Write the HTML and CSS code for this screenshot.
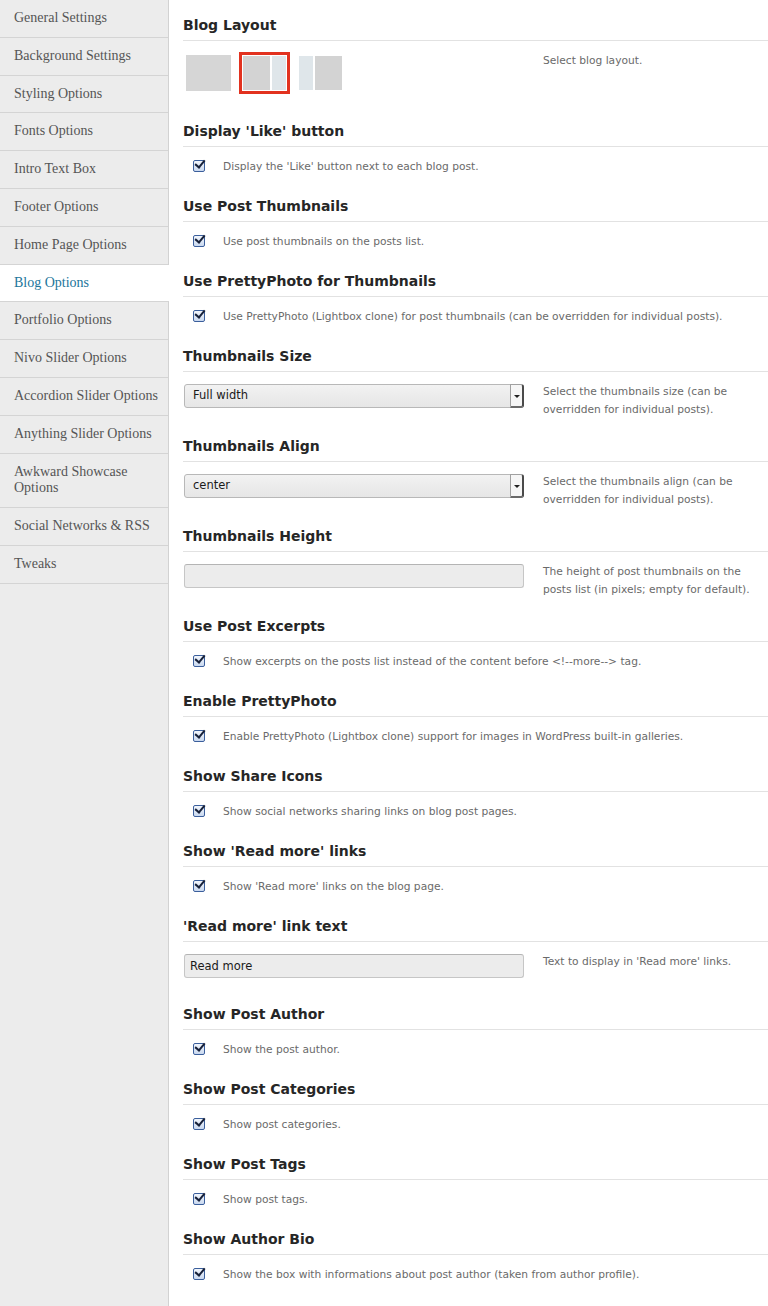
FILE: index.html
```html
<!DOCTYPE html>
<html lang="en">
<head>
    <meta charset="UTF-8">
    <meta name="viewport" content="width=device-width, initial-scale=1.0">
    <title>Theme Options - Blog</title>
    <link rel="stylesheet" href="styles.css">
</head>
<body>
    <div class="page">
        <!-- Options menu -->
        <nav class="sidebar">
            <ul class="menu">
                <li><a href="#">General Settings</a></li>
                <li><a href="#">Background Settings</a></li>
                <li><a href="#">Styling Options</a></li>
                <li><a href="#">Fonts Options</a></li>
                <li><a href="#">Intro Text Box</a></li>
                <li><a href="#">Footer Options</a></li>
                <li><a href="#">Home Page Options</a></li>
                <li class="active"><a href="#">Blog Options</a></li>
                <li><a href="#">Portfolio Options</a></li>
                <li><a href="#">Nivo Slider Options</a></li>
                <li><a href="#">Accordion Slider Options</a></li>
                <li><a href="#">Anything Slider Options</a></li>
                <li><a href="#">Awkward Showcase Options</a></li>
                <li><a href="#">Social Networks &amp; RSS</a></li>
                <li><a href="#">Tweaks</a></li>
            </ul>
        </nav>

        <!-- Blog options -->
        <main class="content">
            <div class="option">
                <h3>Blog Layout</h3>
                <div class="row">
                    <div class="control">
                        <div class="layouts">
                            <span class="layout"><span class="thumb full"></span></span>
                            <span class="layout selected"><span class="thumb right"><i class="main"></i><i class="side"></i></span></span>
                            <span class="layout"><span class="thumb left"><i class="side"></i><i class="main"></i></span></span>
                        </div>
                    </div>
                    <p class="desc">Select blog layout.</p>
                </div>
            </div>

            <div class="option">
                <h3>Display 'Like' button</h3>
                <label class="check-row"><span class="checkbox"></span>Display the 'Like' button next to each blog post.</label>
            </div>

            <div class="option">
                <h3>Use Post Thumbnails</h3>
                <label class="check-row"><span class="checkbox"></span>Use post thumbnails on the posts list.</label>
            </div>

            <div class="option">
                <h3>Use PrettyPhoto for Thumbnails</h3>
                <label class="check-row"><span class="checkbox"></span>Use PrettyPhoto (Lightbox clone) for post thumbnails (can be overridden for individual posts).</label>
            </div>

            <div class="option">
                <h3>Thumbnails Size</h3>
                <div class="row">
                    <div class="control">
                        <div class="select">Full width<span class="arrow"></span></div>
                    </div>
                    <p class="desc">Select the thumbnails size (can be overridden for individual posts).</p>
                </div>
            </div>

            <div class="option">
                <h3>Thumbnails Align</h3>
                <div class="row">
                    <div class="control">
                        <div class="select">center<span class="arrow"></span></div>
                    </div>
                    <p class="desc">Select the thumbnails align (can be overridden for individual posts).</p>
                </div>
            </div>

            <div class="option">
                <h3>Thumbnails Height</h3>
                <div class="row">
                    <div class="control">
                        <input class="text-field" type="text" value="">
                    </div>
                    <p class="desc">The height of post thumbnails on the posts list (in pixels; empty for default).</p>
                </div>
            </div>

            <div class="option">
                <h3>Use Post Excerpts</h3>
                <label class="check-row"><span class="checkbox"></span>Show excerpts on the posts list instead of the content before &lt;!--more--&gt; tag.</label>
            </div>

            <div class="option">
                <h3>Enable PrettyPhoto</h3>
                <label class="check-row"><span class="checkbox"></span>Enable PrettyPhoto (Lightbox clone) support for images in WordPress built-in galleries.</label>
            </div>

            <div class="option">
                <h3>Show Share Icons</h3>
                <label class="check-row"><span class="checkbox"></span>Show social networks sharing links on blog post pages.</label>
            </div>

            <div class="option">
                <h3>Show 'Read more' links</h3>
                <label class="check-row"><span class="checkbox"></span>Show 'Read more' links on the blog page.</label>
            </div>

            <div class="option">
                <h3>'Read more' link text</h3>
                <div class="row">
                    <div class="control">
                        <input class="text-field" type="text" value="Read more">
                    </div>
                    <p class="desc">Text to display in 'Read more' links.</p>
                </div>
            </div>

            <div class="option">
                <h3>Show Post Author</h3>
                <label class="check-row"><span class="checkbox"></span>Show the post author.</label>
            </div>

            <div class="option">
                <h3>Show Post Categories</h3>
                <label class="check-row"><span class="checkbox"></span>Show post categories.</label>
            </div>

            <div class="option">
                <h3>Show Post Tags</h3>
                <label class="check-row"><span class="checkbox"></span>Show post tags.</label>
            </div>

            <div class="option">
                <h3>Show Author Bio</h3>
                <label class="check-row"><span class="checkbox"></span>Show the box with informations about post author (taken from author profile).</label>
            </div>
        </main>
    </div>
</body>
</html>
```

FILE: styles.css
```css
body {
    margin: 0;
    padding: 0;
    background-color: #fff;
    font-family: "DejaVu Sans", Verdana, sans-serif;
    color: #333;
}
.page {
    display: flex;
    min-height: 1306px;
}

/* sidebar menu */
.sidebar {
    width: 168px;
    flex-shrink: 0;
    background-color: #ececec;
    border-right: 1px solid #d2d2d2;
}
.menu {
    list-style: none;
    margin: 0;
    padding: 0;
}
.menu li {
    border-bottom: 1px solid #d4d4d4;
}
.menu a {
    display: block;
    padding: 10px 8px 10px 14px;
    font-family: "Liberation Serif", Georgia, serif;
    font-size: 14px;
    line-height: 16.8px;
    color: #555;
    text-decoration: none;
}
.menu li.active {
    background-color: #fff;
    margin-right: -1px;
}
.menu li.active a {
    color: #21759b;
}

/* options */
.content {
    flex: 1;
    padding-top: 14px;
    padding-left: 14px;
}
.option h3 {
    margin: 0;
    padding: 1px 0 4px;
    font-size: 14px;
    line-height: 21px;
    font-weight: bold;
    color: #262626;
    border-bottom: 1px solid #e2e2e2;
}
.row {
    display: flex;
    gap: 20px;
    padding: 11px 0 16px;
}
.control {
    width: 340px;
    flex-shrink: 0;
}
.desc {
    margin: 0;
    width: 215px;
    font-size: 10.66px;
    line-height: 18px;
    color: #6a6a6a;
}

/* layout picker */
.layouts {
    display: flex;
    gap: 5px;
    margin-bottom: 10px;
}
.layout {
    display: block;
    padding: 3px;
    border: 0 solid #e2321f;
}
.layout.selected {
    padding: 0;
    border-width: 3px;
}
.thumb {
    display: flex;
    width: 45px;
    height: 36px;
    gap: 2px;
    box-sizing: border-box;
}
.thumb.full {
    background-color: #d6d6d6;
}
.thumb.right,
.thumb.left {
    padding: 1px;
}
.thumb .main {
    flex: 1;
    background-color: #d3d3d3;
}
.thumb .side {
    width: 14px;
    background-color: #dfe6ea;
}

/* checkbox rows */
.check-row {
    display: flex;
    align-items: center;
    padding: 11px 0 19px 10px;
    font-size: 10.66px;
    line-height: 18px;
    color: #6a6a6a;
}
.checkbox {
    position: relative;
    width: 10px;
    height: 10px;
    margin-top: -2px;
    margin-right: 18px;
    border: 1px solid #3b5f9c;
    border-radius: 2px;
    background: linear-gradient(#f2f6fc, #c9d8ef);
}
.checkbox::after {
    content: "";
    position: absolute;
    left: 3px;
    top: -3px;
    width: 4px;
    height: 8px;
    border: solid #17213a;
    border-width: 0 2px 2px 0;
    transform: rotate(40deg);
}

/* fields */
.select,
.text-field {
    display: block;
    box-sizing: border-box;
    width: 340px;
    height: 24px;
    margin: 1px 0 9px 1px;
    border: 1px solid #c6c6c6;
    border-radius: 3px;
    background-color: #ececec;
    font-family: "DejaVu Sans", Verdana, sans-serif;
    font-size: 11.5px;
    color: #1a1a1a;
}
.select {
    position: relative;
    padding-left: 8px;
    line-height: 20px;
    background: linear-gradient(#f2f2f2, #e6e6e6);
    border-color: #b8b8b8;
}
.select .arrow {
    position: absolute;
    right: -1px;
    top: -1px;
    width: 14px;
    height: 24px;
    box-sizing: border-box;
    border: 1px solid #a0a0a0;
    border-right: 2px solid #4a4a4a;
    border-bottom: 2px solid #6a6a6a;
    border-radius: 0 3px 3px 0;
    background: #f6f6f6;
}
.select .arrow::after {
    content: "";
    position: absolute;
    left: 3px;
    top: 10px;
    border-left: 3px solid transparent;
    border-right: 3px solid transparent;
    border-top: 3px solid #222;
}
.text-field {
    padding: 0 5px;
    border-top-color: #b4b4b4;
    outline: none;
}
```
